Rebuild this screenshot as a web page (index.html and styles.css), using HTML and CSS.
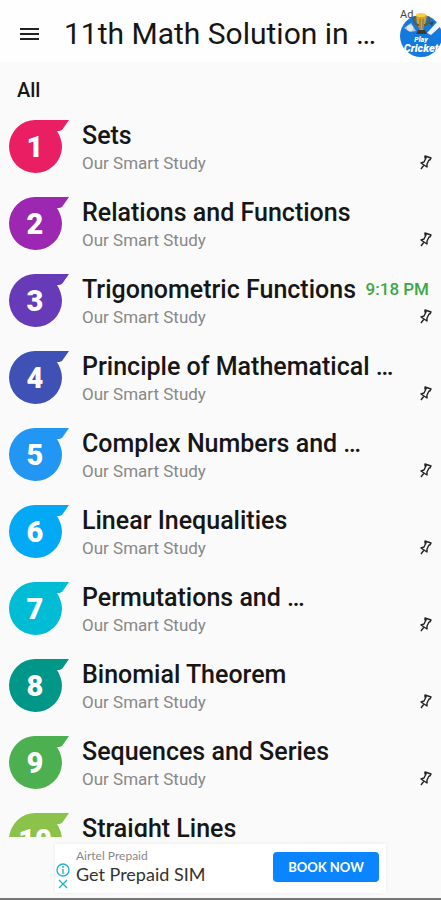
FILE: index.html
```
<!DOCTYPE html>
<html lang="en">
<head>
    <meta charset="UTF-8">
    <meta name="viewport" content="width=device-width, initial-scale=1.0">
    <title>11th Math Solution</title>
    <link rel="stylesheet" href="styles.css">
</head>
<body>
    <!-- Shared shapes -->
    <svg class="defs" width="0" height="0" aria-hidden="true">
        <symbol id="drop" viewBox="0 0 60 54">
            <path d="M27 0H60L53 10C51 11 50 11 48 11C51 16 53 21 53 27A26.5 26.5 0 1 1 27 0Z"/>
        </symbol>
        <symbol id="pin" viewBox="0 0 14 16">
            <path d="M6 2L12 4L11 6L10 6L8 10L8 13L2 9L5 8L7 4L6 4ZM5 11L2 15" fill="none" stroke="#222" stroke-width="1.4" stroke-linejoin="round"/>
        </symbol>
    </svg>

    <header class="app-bar">
        <button class="menu-btn" type="button" aria-label="Menu">
            <svg width="20" height="14" viewBox="0 0 20 14"><path d="M0 2H19M0 7H19M0 12H19" stroke="#222" stroke-width="2"/></svg>
        </button>
        <h1>11th Math Solution in …</h1>
        <a class="promo" href="#cricket" aria-label="Play Cricket">
            <svg width="41" height="50" viewBox="0 0 41 50">
                <circle cx="21" cy="27" r="21" fill="#1479dc"/>
                <path d="M4 19L11 14L16 22L10 23Z" fill="#b9c4cc"/>
                <circle cx="10" cy="19" r="3" fill="#e4e8ea"/>
                <path d="M27 24L38 12L41 17L31 26Z" fill="#f2f5f8"/>
                <path d="M29 14L34 12L32 17Z" fill="#34434f"/>
                <path d="M16 6H27L25 15L23 21H20L17 15Z" fill="#d8a21c"/>
                <path d="M15 8C12 9 14 16 19 16M28 8C31 9 29 16 24 16" fill="none" stroke="#6b5a2c" stroke-width="2"/>
                <ellipse cx="21" cy="6" rx="5" ry="2" fill="#f7cf3e"/>
                <path d="M20 10V20M23 10V20" stroke="#66727a" stroke-width="1"/>
                <path d="M18 21H25L27 25H16Z" fill="#3d3a36"/>
                <text class="promo-small" x="21" y="33">Play</text>
                <text class="promo-big" x="21" y="43">Cricket</text>
                <text class="promo-ad" x="0" y="9">Ad</text>
            </svg>
        </a>
    </header>

    <main>
        <h2>All</h2>
        <ul class="chapters">
            <li class="chapter">
                <span class="badge pink"><svg><use href="#drop"/></svg><b>1</b></span>
                <div class="info"><h3>Sets</h3><p>Our Smart Study</p></div>
                <button class="pin" type="button" aria-label="Pin Sets"><svg><use href="#pin"/></svg></button>
            </li>
            <li class="chapter">
                <span class="badge purple"><svg><use href="#drop"/></svg><b>2</b></span>
                <div class="info"><h3>Relations and Functions</h3><p>Our Smart Study</p></div>
                <button class="pin" type="button" aria-label="Pin Relations and Functions"><svg><use href="#pin"/></svg></button>
            </li>
            <li class="chapter">
                <span class="badge violet"><svg><use href="#drop"/></svg><b>3</b></span>
                <div class="info"><h3>Trigonometric Functions</h3><p>Our Smart Study</p></div>
                <time>9:18 PM</time>
                <button class="pin" type="button" aria-label="Pin Trigonometric Functions"><svg><use href="#pin"/></svg></button>
            </li>
            <li class="chapter">
                <span class="badge indigo"><svg><use href="#drop"/></svg><b>4</b></span>
                <div class="info"><h3>Principle of Mathematical …</h3><p>Our Smart Study</p></div>
                <button class="pin" type="button" aria-label="Pin Principle of Mathematical"><svg><use href="#pin"/></svg></button>
            </li>
            <li class="chapter">
                <span class="badge blue"><svg><use href="#drop"/></svg><b>5</b></span>
                <div class="info"><h3>Complex Numbers and …</h3><p>Our Smart Study</p></div>
                <button class="pin" type="button" aria-label="Pin Complex Numbers"><svg><use href="#pin"/></svg></button>
            </li>
            <li class="chapter">
                <span class="badge sky"><svg><use href="#drop"/></svg><b>6</b></span>
                <div class="info"><h3>Linear Inequalities</h3><p>Our Smart Study</p></div>
                <button class="pin" type="button" aria-label="Pin Linear Inequalities"><svg><use href="#pin"/></svg></button>
            </li>
            <li class="chapter">
                <span class="badge cyan"><svg><use href="#drop"/></svg><b>7</b></span>
                <div class="info"><h3>Permutations and …</h3><p>Our Smart Study</p></div>
                <button class="pin" type="button" aria-label="Pin Permutations"><svg><use href="#pin"/></svg></button>
            </li>
            <li class="chapter">
                <span class="badge teal"><svg><use href="#drop"/></svg><b>8</b></span>
                <div class="info"><h3>Binomial Theorem</h3><p>Our Smart Study</p></div>
                <button class="pin" type="button" aria-label="Pin Binomial Theorem"><svg><use href="#pin"/></svg></button>
            </li>
            <li class="chapter">
                <span class="badge green"><svg><use href="#drop"/></svg><b>9</b></span>
                <div class="info"><h3>Sequences and Series</h3><p>Our Smart Study</p></div>
                <button class="pin" type="button" aria-label="Pin Sequences and Series"><svg><use href="#pin"/></svg></button>
            </li>
            <li class="chapter">
                <span class="badge lime"><svg><use href="#drop"/></svg><b>10</b></span>
                <div class="info"><h3>Straight Lines</h3><p>Our Smart Study</p></div>
                <button class="pin" type="button" aria-label="Pin Straight Lines"><svg><use href="#pin"/></svg></button>
            </li>
        </ul>
    </main>

    <footer>
        <div class="ad">
            <div class="ad-icons">
                <svg width="14" height="14" viewBox="0 0 14 14"><circle cx="7" cy="7" r="6"/><path d="M7 6V11M7 3V5"/></svg>
                <svg width="14" height="14" viewBox="0 0 14 14"><path d="M3 3L11 11M11 3L3 11"/></svg>
            </div>
            <div class="ad-text">
                <p class="ad-brand">Airtel Prepaid</p>
                <p class="ad-title">Get Prepaid SIM</p>
            </div>
            <button class="ad-btn" type="button">BOOK NOW</button>
        </div>
    </footer>
</body>
</html>
```
FILE: styles.css
```
* {
    box-sizing: border-box;
}

body {
    display: flex;
    flex-direction: column;
    margin: 0;
    height: 100vh;
    overflow: hidden;
    font-family: Roboto, sans-serif;
    color: #161616;
    background: #fafafa;
}

h1, h2, h3, p, ul {
    margin: 0;
    padding: 0;
}

button {
    padding: 0;
    border: 0;
    background: none;
    font-family: inherit;
}

svg {
    display: block;
}

.defs {
    position: absolute;
}

.app-bar {
    display: flex;
    align-items: center;
    flex-shrink: 0;
    height: 62px;
    padding-top: 6px;
    padding-left: 20px;
    background: #fefefe;
}

.menu-btn {
    margin-right: 24px;
}

h1 {
    flex: 1;
    font-size: 30px;
    font-weight: 400;
    line-height: 36px;
    white-space: nowrap;
}

.promo-ad {
    font-size: 11px;
    fill: #444;
}

.promo-small,
.promo-big {
    font-weight: 900;
    font-style: italic;
    text-anchor: middle;
    fill: #fff;
}

.promo-small {
    font-size: 7px;
}

.promo-big {
    font-size: 11px;
}

main {
    flex: 1;
    min-height: 0;
    overflow: hidden;
}

h2 {
    padding: 16px 17px 6px;
    font-size: 20px;
    font-weight: 500;
    line-height: 24px;
}

.chapters {
    list-style: none;
}

.chapter {
    display: grid;
    grid-template-columns: 73px 1fr auto;
    grid-template-rows: 32px 20px;
    height: 77px;
    padding: 12px 8px 12px 9px;
}

.badge {
    position: relative;
    grid-row: 1 / 3;
    width: 60px;
    height: 54px;
}

.badge svg {
    width: 60px;
    height: 54px;
    fill: currentColor;
}

.badge b {
    position: absolute;
    top: 0;
    left: 0;
    width: 52px;
    font-size: 29px;
    font-weight: 900;
    line-height: 54px;
    text-align: center;
    color: #fff;
}

.pink { color: #e91e63; }
.purple { color: #9c27b0; }
.violet { color: #673ab7; }
.indigo { color: #3f51b5; }
.blue { color: #2196f3; }
.sky { color: #03a9f4; }
.cyan { color: #00bcd4; }
.teal { color: #009688; }
.green { color: #4caf50; }
.lime { color: #8bc34a; }

.info {
    grid-row: 1 / 3;
    grid-column: 2;
    white-space: nowrap;
}

h3 {
    font-size: 25px;
    font-weight: 500;
    line-height: 32px;
}

.info p {
    font-size: 17px;
    line-height: 22px;
    color: #888;
}

time {
    grid-row: 1;
    grid-column: 3;
    padding-right: 4px;
    font-size: 17px;
    font-weight: 500;
    line-height: 30px;
    color: #3aa844;
}

.pin {
    grid-row: 2;
    grid-column: 3;
    justify-self: end;
    width: 14px;
    height: 20px;
}

.pin svg {
    width: 14px;
    height: 16px;
}

footer {
    flex-shrink: 0;
    padding: 7px 55px 5px;
    border-bottom: 2px solid #777;
}

.ad {
    display: flex;
    align-items: center;
    height: 49px;
    padding-right: 7px;
    padding-bottom: 3px;
    background: #fff;
    box-shadow: 0 0 3px rgba(0, 0, 0, 0.08);
}

.ad-icons {
    width: 21px;
    padding-top: 20px;
    padding-left: 1px;
    fill: none;
    stroke: #27b3cc;
    stroke-width: 1.4;
}

.ad-text {
    flex: 1;
    font-family: Lato, sans-serif;
    white-space: nowrap;
}

.ad-brand {
    font-size: 12px;
    line-height: 14px;
    color: #888;
}

.ad-title {
    font-size: 18px;
    line-height: 22px;
    color: #333;
}

.ad-btn {
    width: 106px;
    height: 30px;
    border-radius: 4px;
    background: #0a84ff;
    color: #fff;
    font-family: Lato, sans-serif;
    font-size: 13px;
    font-weight: 700;
}
```
